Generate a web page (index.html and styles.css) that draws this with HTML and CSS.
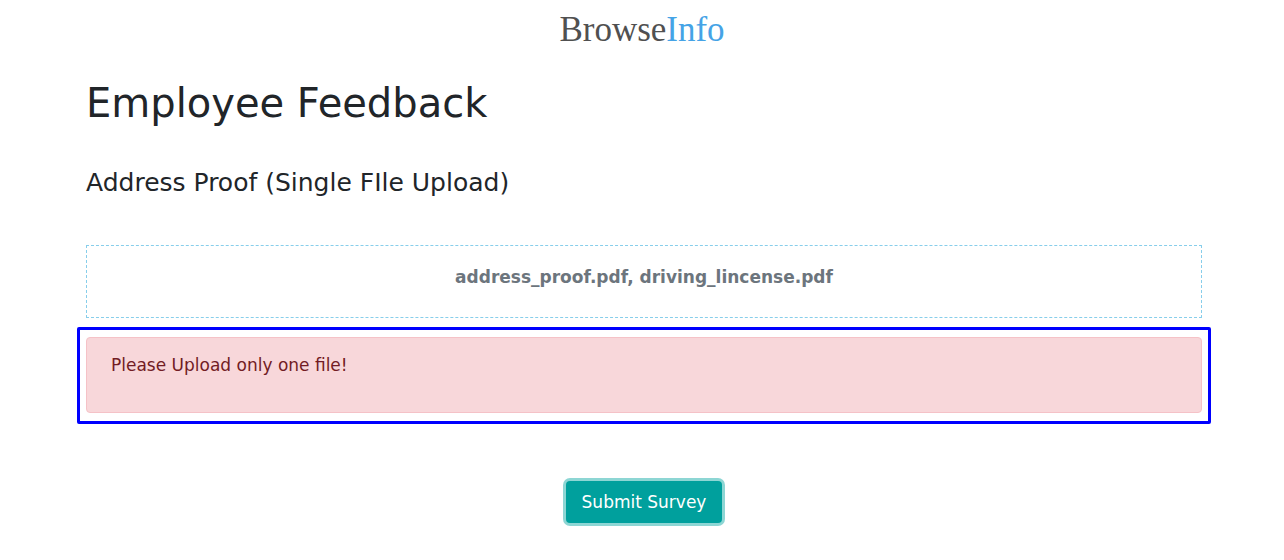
FILE: index.html
```html
<!DOCTYPE html>
<html lang="en">
<head>
<meta charset="utf-8">
<meta name="viewport" content="width=device-width, initial-scale=1">
<title>Employee Feedback</title>
<link rel="stylesheet" href="styles.css">
</head>
<body>
<header class="brand">Browse<span class="brand-accent">Info</span></header>
<main class="survey">
  <h1 class="survey-title">Employee Feedback</h1>
  <form class="survey-form">
    <h2 class="question">Address Proof (Single FIle Upload)</h2>
    <div class="dropzone">address_proof.pdf, driving_lincense.pdf</div>
    <div class="highlight">
      <div class="alert" role="alert">Please Upload only one file!</div>
    </div>
    <button class="submit" type="button">Submit Survey</button>
  </form>
</main>
</body>
</html>
```
FILE: styles.css
```css
* {
  box-sizing: border-box;
}

body {
  margin: 0;
  background: #fff;
  color: #212529;
  font-family: "DejaVu Sans", sans-serif;
  font-size: 17px;
  line-height: 26px;
}

.brand {
  padding: 8px 0;
  color: #505050;
  font-family: "Liberation Serif", serif;
  font-size: 35px;
  line-height: 44px;
  text-align: center;
}

.brand-accent {
  color: #45a3e6;
}

.survey {
  padding: 18px 82px 24px 86px;
}

.survey-title {
  margin: 0;
  font-size: 40px;
  font-weight: 400;
  line-height: 50px;
}

.survey-form {
  display: flex;
  flex-direction: column;
}

.question {
  margin: 40px 0 47px;
  font-size: 25px;
  font-weight: 400;
  line-height: 30px;
}

.dropzone {
  padding: 18px 16px 27px;
  border: 1px dashed #87ceeb;
  color: #6c757d;
  font-weight: 700;
  text-align: center;
}

.highlight {
  margin: 9px -9px 0;
  padding: 7px 6px 8px;
  border: 3px solid #00f;
  border-radius: 2px;
}

.alert {
  padding: 14px 24px 34px;
  border: 1px solid #f5c2c7;
  border-radius: 4px;
  background: #f8d7da;
  color: #721c24;
}

.submit {
  align-self: center;
  margin-top: 57px;
  padding: 8px 16px;
  border: 0;
  border-radius: 4px;
  background: #00a09d;
  box-shadow: 0 0 0 3px #8dd6d4;
  color: #fff;
  font: inherit;
}
```
